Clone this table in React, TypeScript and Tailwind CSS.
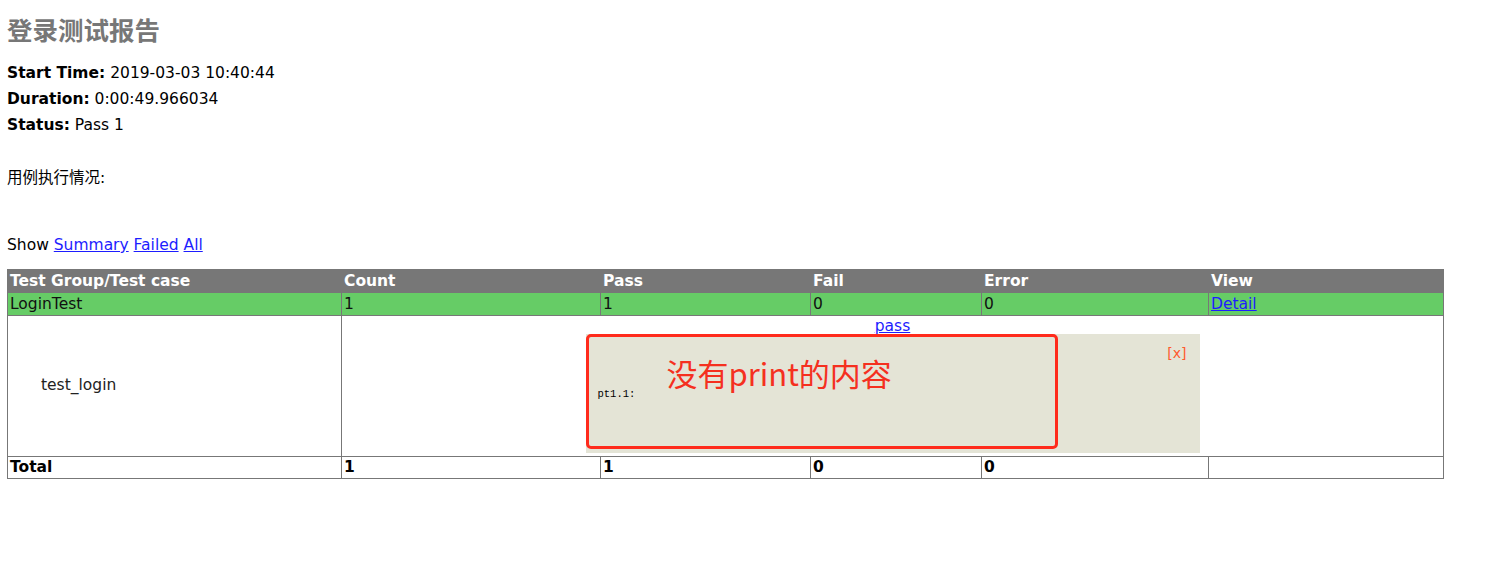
export default function App() {
  const verdana = "font-['DejaVu_Sans','Noto_Sans_CJK_SC',sans-serif]";
  const cell = "border border-[#777] px-[2px] text-left align-middle";

  return (
    <main className={`min-h-screen bg-white text-[15.5px] text-black ${verdana}`}>
      <div className="px-[7px]">
        {/* Heading */}
        <h1 className="pt-[16px] h-[46px] text-[25.5px] leading-[30px] font-bold text-[#777]">
          登录测试报告
        </h1>

        <div className="mt-[14px] leading-[26px]">
          <p>
            <b>Start Time:</b> 2019-03-03 10:40:44
          </p>
          <p>
            <b>Duration:</b> 0:00:49.966034
          </p>
          <p>
            <b>Status:</b> Pass 1
          </p>
        </div>

        <p className="mt-[27px] leading-[26px]">用例执行情况:</p>

        <p className="mt-[41px] leading-[26px]">
          Show{" "}
          <a className="text-[#1d1dff] underline">Summary</a>{" "}
          <a className="text-[#1d1dff] underline">Failed</a>{" "}
          <a className="text-[#1d1dff] underline">All</a>
        </p>

        {/* Result table */}
        <table className="mt-[11px] w-[1436px] table-fixed border-collapse border border-[#777]">
          <colgroup>
            <col className="w-[334px]" />
            <col className="w-[259px]" />
            <col className="w-[210px]" />
            <col className="w-[171px]" />
            <col className="w-[227px]" />
            <col className="w-[235px]" />
          </colgroup>
          <thead>
            <tr className="h-[23px] bg-[#777] text-white font-bold leading-[20px]">
              <td className={cell}>Test Group/Test case</td>
              <td className={cell}>Count</td>
              <td className={cell}>Pass</td>
              <td className={cell}>Fail</td>
              <td className={cell}>Error</td>
              <td className={cell}>View</td>
            </tr>
          </thead>
          <tbody>
            <tr className="h-[23px] bg-[#66cc66] text-[#111] leading-[20px]">
              <td className={cell}>LoginTest</td>
              <td className={cell}>1</td>
              <td className={cell}>1</td>
              <td className={cell}>0</td>
              <td className={cell}>0</td>
              <td className={cell}>
                <a className="text-[#1d1dff] underline">Detail</a>
              </td>
            </tr>
            <tr className="h-[141px]">
              <td className={`${cell} text-[#222]`}>
                <span className="pl-[31px]">test_login</span>
              </td>
              <td colSpan={5} className="border border-[#777] align-top text-center pb-[2px]">
                <a className="block pt-[3px] leading-[15px] text-[#1d1dff] underline">pass</a>
                <div className="relative mx-auto h-[119px] w-[614px] bg-[#e4e4d6] pl-[12px] pr-[13px] pt-[10px] text-left">
                  <div className="text-right text-[14px] leading-[18px] text-[#ff5a2e]">[x]</div>
                  <pre className="mt-[25px] font-['Liberation_Mono',monospace] text-[10.5px] leading-[14px] text-black">
                    pt1.1:
                  </pre>
                  {/* annotation drawn over the screenshot */}
                  <div className="absolute left-0 top-0 h-[115px] w-[472px] rounded-[5px] border-[3px] border-[#ff2b1c]">
                    <span className="absolute left-[78px] top-[16px] font-['Noto_Sans_CJK_SC',sans-serif] text-[31px] leading-[40px] text-[#f5301f]">
                      没有print的内容
                    </span>
                  </div>
                </div>
              </td>
            </tr>
            <tr className="h-[22px] font-bold leading-[19px]">
              <td className={cell}>Total</td>
              <td className={cell}>1</td>
              <td className={cell}>1</td>
              <td className={cell}>0</td>
              <td className={cell}>0</td>
              <td className={cell}>&nbsp;</td>
            </tr>
          </tbody>
        </table>
      </div>
    </main>
  );
}
